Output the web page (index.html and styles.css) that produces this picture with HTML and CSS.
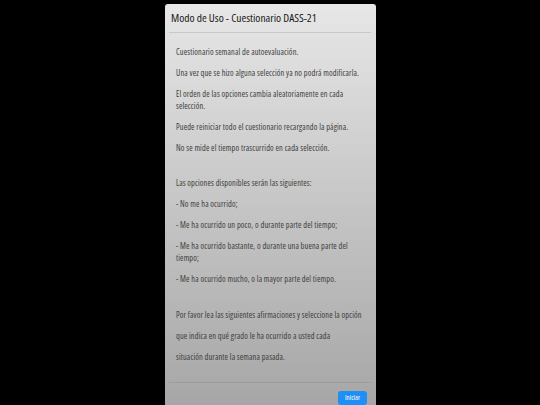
FILE: index.html
```html
<!DOCTYPE html>
<html lang="es">
<head>
<meta charset="utf-8">
<title>Modo de Uso</title>
<link rel="stylesheet" href="styles.css">
</head>
<body>
<div class="screen">
  <div class="modal">
    <div class="modal-header">
      <h1 class="title">Modo de Uso - Cuestionario DASS-21</h1>
    </div>
    <div class="modal-body">
      <p>Cuestionario semanal de autoevaluación.</p>
      <p>Una vez que se hizo alguna selección ya no podrá modificarla.</p>
      <p>El orden de las opciones cambia aleatoriamente en cada selección.</p>
      <p>Puede reiniciar todo el cuestionario recargando la página.</p>
      <p>No se mide el tiempo trascurrido en cada selección.</p>
      <p class="gap">Las opciones disponibles serán las siguientes:</p>
      <p>- No me ha ocurrido;</p>
      <p>- Me ha ocurrido un poco, o durante parte del tiempo;</p>
      <p>- Me ha ocurrido bastante, o durante una buena parte del tiempo;</p>
      <p>- Me ha ocurrido mucho, o la mayor parte del tiempo.</p>
      <p class="intro">Por favor lea las siguientes afirmaciones y seleccione la opción<br>que indica en qué grado le ha ocurrido a usted cada<br>situación durante la semana pasada.</p>
    </div>
    <div class="modal-footer">
      <button class="btn" type="button">Iniciar</button>
    </div>
  </div>
</div>
</body>
</html>
```

FILE: styles.css
```css
html, body {
  margin: 0;
  padding: 0;
  background: #000;
}

.screen {
  width: 540px;
  height: 405px;
  overflow: hidden;
  padding-top: 4px;
  box-sizing: border-box;
  font-family: "Open Sans", sans-serif;
  font-stretch: 75%;
}

.modal {
  margin-left: 165px;
  width: 211px;
  height: 420px;
  background: linear-gradient(#e7e7e7 0%, #c4c4c4 50%, #a6a6a6 96%, #a4a4a4 100%);
  border-radius: 3px 3px 0 0;
  box-sizing: border-box;
}

.modal-header {
  height: 29px;
  margin: 0 5px 0 4px;
  padding-left: 2px;
  border-bottom: 1px solid #c9c9c9;
  display: flex;
  align-items: center;
  box-sizing: border-box;
}

.title {
  margin: 0;
  font-size: 11.5px;
  font-weight: normal;
  color: #1a1a1a;
  line-height: 14px;
}

.modal-body {
  padding: 13px 10px 6px 11px;
  color: #3c3c3c;
  font-size: 8.3px;
  font-weight: 400;
  letter-spacing: 0.13px;
  line-height: 12px;
}

.modal-body p {
  margin: 0 0 9px;
}

.modal-body .gap {
  padding-top: 14px;
}

.modal-body .intro {
  padding-top: 10px;
  line-height: 21px;
}

.modal-footer {
  margin: 0 5px 0 4px;
  border-top: 1px solid #9d9d9d;
  padding: 8px 4px 0 0;
  display: flex;
  justify-content: flex-end;
}

.btn {
  font-family: inherit;
  font-stretch: inherit;
  font-size: 7px;
  color: #fff;
  background: #1f8ff5;
  border: none;
  border-radius: 3px;
  width: 29px;
  height: 14px;
  padding: 0;
  line-height: 14px;
}
```
